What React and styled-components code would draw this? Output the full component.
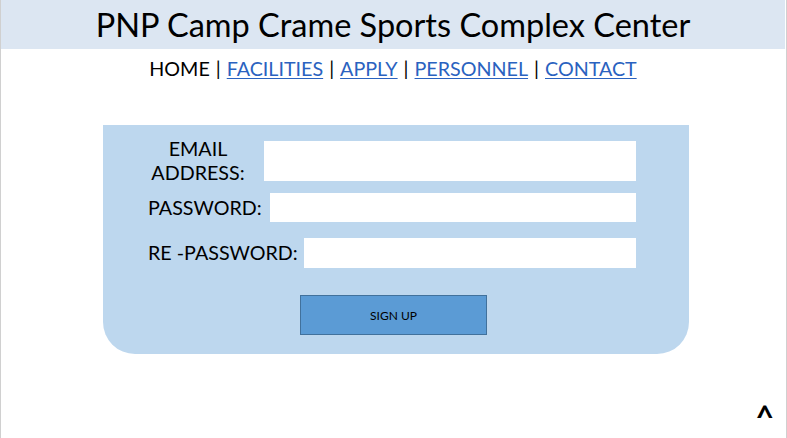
import styled, { createGlobalStyle } from "styled-components";

const GlobalStyle = createGlobalStyle`
  html, body {
    margin: 0;
    padding: 0;
    background: #fff;
  }
  body {
    font-family: Lato, "Open Sans", sans-serif;
    color: #000;
  }
`;

export default function App() {
  return (
    <>
      <GlobalStyle />
      <Page>
        <Header>
          <Title>PNP Camp Crame Sports Complex Center</Title>
        </Header>
        <Nav>
          <NavItem>HOME</NavItem>
          <Sep>|</Sep>
          <NavLink href="#">FACILITIES</NavLink>
          <Sep>|</Sep>
          <NavLink href="#">APPLY</NavLink>
          <Sep>|</Sep>
          <NavLink href="#">PERSONNEL</NavLink>
          <Sep>|</Sep>
          <NavLink href="#">CONTACT</NavLink>
        </Nav>
        <Panel>
          <Row $top={12}>
            <Label $width={100} $gap={16}>
              EMAIL
              <br />
              ADDRESS:
            </Label>
            <Input $height={40} />
          </Row>
          <Row $top={8}>
            <Label $gap={8}>PASSWORD:</Label>
            <Input $height={29} />
          </Row>
          <Row $top={16}>
            <Label $gap={6}>RE -PASSWORD:</Label>
            <Input $height={30} />
          </Row>
          <ButtonRow>
            <SignUp>SIGN UP</SignUp>
          </ButtonRow>
        </Panel>
        <TopLink>^</TopLink>
      </Page>
    </>
  );
}

const Page = styled.div`
  width: 787px;
  min-height: 438px;
  border-left: 1px solid #d0d0d0;
  border-right: 1px solid #d0d0d0;
  padding-right: 1px;
  box-sizing: border-box;
  position: relative;
`;

const Header = styled.div`
  background: #dce6f2;
  height: 49px;
  display: flex;
  align-items: center;
  justify-content: center;
`;

const Title = styled.h1`
  margin: 0;
  font-family: Lato, sans-serif;
  font-weight: 400;
  font-size: 32.5px;
  line-height: 40px;
`;

const Nav = styled.nav`
  display: flex;
  justify-content: center;
  align-items: center;
  gap: 6px;
  margin-top: 6px;
  font-size: 19.7px;
  line-height: 28px;
`;

const NavItem = styled.span`
  color: #000;
`;

const Sep = styled.span`
  color: #000;
`;

const NavLink = styled.a`
  color: #2a62c0;
  text-decoration: underline;
  text-underline-offset: 2px;
`;

const Panel = styled.div`
  margin: 42px 0 0 102px;
  width: 586px;
  height: 229px;
  box-sizing: border-box;
  background: #bdd7ee;
  border-radius: 0 0 32px 32px;
  padding: 0 53px 0 45px;
  display: flex;
  flex-direction: column;
`;

const Row = styled.div`
  display: flex;
  align-items: center;
  margin-top: ${(p) => p.$top}px;
`;

const Label = styled.label`
  font-size: 19.7px;
  line-height: 24px;
  text-align: center;
  white-space: nowrap;
  margin-right: ${(p) => p.$gap}px;
  ${(p) => (p.$width ? `width: ${p.$width}px;` : "")}
`;

const Input = styled.input`
  flex: 1;
  height: ${(p) => p.$height}px;
  box-sizing: border-box;
  border: none;
  background: #fff;
  outline: none;
`;

const ButtonRow = styled.div`
  display: flex;
  justify-content: center;
  margin-top: 27px;
  padding-left: 5px;
`;

const SignUp = styled.button`
  width: 187px;
  height: 40px;
  background: #5b9bd5;
  border: 1px solid #41719c;
  font-family: Lato, sans-serif;
  font-size: 12px;
  color: #000;
  margin-left: -2px;
`;

const TopLink = styled.div`
  position: absolute;
  right: 12px;
  bottom: 3px;
  font-size: 32px;
  line-height: 36px;
  font-weight: 700;
`;
